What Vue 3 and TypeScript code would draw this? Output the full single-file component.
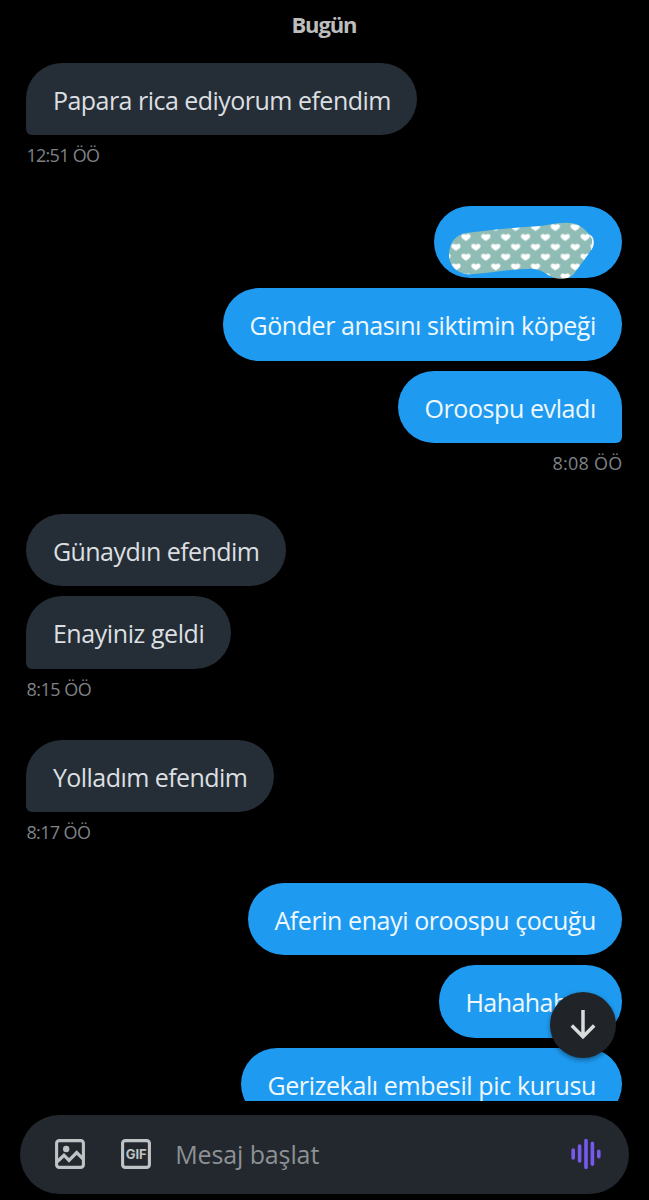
<script setup lang="ts">
import { nextTick, onMounted, ref } from 'vue'

interface Message {
  text: string
  width: number
  covered?: boolean
}

interface Group {
  side: 'in' | 'out'
  time?: string
  timeWidth?: number
  messages: Message[]
}

const groups: Group[] = [
  { side: 'in', time: '12:51 ÖÖ', timeWidth: 73, messages: [{ text: 'Papara rica ediyorum efendim', width: 338 }] },
  {
    side: 'out',
    time: '8:08 ÖÖ',
    timeWidth: 70,
    messages: [
      { text: '', width: 135, covered: true },
      { text: 'Gönder anasını siktimin köpeği', width: 346.5 },
      { text: 'Oroospu evladı', width: 171.5 },
    ],
  },
  {
    side: 'in',
    time: '8:15 ÖÖ',
    timeWidth: 65,
    messages: [
      { text: 'Günaydın efendim', width: 206.5 },
      { text: 'Enayiniz geldi', width: 151.5 },
    ],
  },
  { side: 'in', time: '8:17 ÖÖ', timeWidth: 64, messages: [{ text: 'Yolladım efendim', width: 194.5 }] },
  {
    side: 'out',
    messages: [
      { text: 'Aferin enayi oroospu çocuğu', width: 321.5 },
      { text: 'Hahahahah', width: 130.5 },
      { text: 'Gerizekalı embesil pic kurusu', width: 328.5 },
    ],
  },
]

const root = ref<HTMLElement | null>(null)

/** Tracks each label so that it fills its advance width. */
function fitLabels(): void {
  root.value?.querySelectorAll<HTMLElement>('[data-fit]').forEach((el) => {
    const count = el.textContent?.length ?? 0
    if (!count) return
    el.style.letterSpacing = '0px'
    const natural = el.getBoundingClientRect().width
    el.style.letterSpacing = `${(Number(el.dataset.fit) - natural) / count}px`
  })
}

onMounted(async () => {
  await nextTick()
  fitLabels()
})
</script>

<template>
  <main ref="root" class="screen">
    <section class="thread">
      <h1 class="day"><span data-fit="65">Bugün</span></h1>
      <div v-for="(group, g) in groups" :key="g" class="group" :class="group.side">
        <div
          v-for="(message, m) in group.messages"
          :key="m"
          class="bubble"
          :class="{ tail: group.time && m === group.messages.length - 1 }"
          :style="{ width: `${message.width + 53}px` }"
        >
          <span v-if="!message.covered" class="label" :data-fit="message.width">{{ message.text }}</span>
          <svg v-else class="scribble" viewBox="66 81 450 177" width="150" height="59">
            <defs>
              <pattern id="hearts" x="93" y="101" width="59.6" height="59.2" patternUnits="userSpaceOnUse">
                <rect width="59.6" height="59.2" fill="#8fbdb5" />
                <g fill="#fff">
                  <path id="heart" d="M0 10C-6 6-14 2-14-4C-14-9-10-10-7-10C-4-10-1-9 0-7C1-9 4-10 7-10C10-10 14-9 14-4C14 2 6 6 0 10Z" />
                  <use href="#heart" x="59.6" />
                  <use href="#heart" y="59.2" />
                  <use href="#heart" x="59.6" y="59.2" />
                  <use href="#heart" x="29.8" y="29.6" />
                </g>
              </pattern>
            </defs>
            <path d="M491 124C506 127 508 152 496 168" fill="none" stroke="#fff" stroke-width="5" />
            <path
              d="M72 183C72 145 94 121 124 117C190 109 265 101 335 97C366 95 386 86 424 86C462 86 480 105 494 123C506 143 502 164 490 181C471 207 459 224 447 239C436 252 421 254 404 254C370 253 358 224 318 224C252 225 190 237 137 241C99 242 72 216 72 183Z"
              fill="url(#hearts)"
            />
          </svg>
        </div>
        <div v-if="group.time" class="meta">
          <span :data-fit="group.timeWidth">{{ group.time }}</span>
        </div>
      </div>
    </section>

    <button class="jump" aria-label="Aşağı">
      <svg viewBox="0 0 66 66" width="66" height="66">
        <path d="M33 18V45.5M21.8 33.6L33 44.8L44.2 33.6" fill="none" stroke="#d9dadb" stroke-width="3.5" />
      </svg>
    </button>

    <footer class="composer">
      <svg class="icon" viewBox="0 0 30 30" width="30" height="30">
        <rect x="1.6" y="1.6" width="26.8" height="26.8" rx="2.7" fill="none" stroke="#c0c3c5" stroke-width="3.1" />
        <circle cx="11.2" cy="10" r="3.2" fill="#c0c3c5" />
        <path d="M2.4 22.5L9 16.2L14 21.3L21.7 13.5L28 19.8" fill="none" stroke="#c0c3c5" stroke-width="3.3" />
      </svg>
      <svg class="icon gif" viewBox="0 0 30 30" width="30" height="30">
        <rect x="1.6" y="1.6" width="26.8" height="26.8" rx="2.7" fill="none" stroke="#c0c3c5" stroke-width="3.1" />
        <text x="15.2" y="19.9" text-anchor="middle" textLength="21" lengthAdjust="spacingAndGlyphs">GIF</text>
      </svg>
      <span class="placeholder"><span data-fit="144">Mesaj başlat</span></span>
      <svg class="voice" viewBox="0 0 32 32" width="32" height="32">
        <path d="M3.2 12V20M9.6 8V23M16 2.5V29.5M22.4 5.3V26.3M28.8 13.2V18.8" fill="none" stroke="#7759ed" stroke-width="3.6" stroke-linecap="round" />
      </svg>
    </footer>
  </main>
</template>

<style>
body {
  margin: 0;
  background: #000;
}
</style>

<style scoped>
.screen {
  position: relative;
  display: flex;
  flex-direction: column;
  width: 649px;
  height: 1200px;
  overflow: hidden;
  background: #000;
  font-family: 'Open Sans', 'Noto Sans', sans-serif;
}
.screen span {
  white-space: nowrap;
}
.thread {
  flex: none;
  box-sizing: border-box;
  height: 1101.4px;
  padding: 0 26.6px 0 26.4px;
  overflow: hidden;
}
.day {
  display: flex;
  justify-content: center;
  box-sizing: border-box;
  height: 62.7px;
  margin: 0;
  padding: 9px 1px 0 0;
  color: #bdbdbd;
  font-size: 22px;
  font-weight: 700;
  line-height: 30px;
}
.group {
  display: flex;
  flex-direction: column;
  align-items: flex-start;
}
.group.out {
  align-items: flex-end;
}
.bubble {
  display: flex;
  flex: none;
  align-items: center;
  box-sizing: border-box;
  height: 72.3px;
  padding: 1.6px 26.5px 0;
  border-radius: 36.15px;
  background: #252e36;
  color: #dcdfe1;
  font-size: 25px;
  line-height: 34px;
}
.bubble + .bubble {
  margin-top: 10px;
}
.out .bubble {
  background: #1e9bf1;
  color: #eef8fe;
}
.in .tail {
  border-bottom-left-radius: 6px;
}
.out .tail {
  border-bottom-right-radius: 6px;
}
.scribble {
  flex: none;
  margin: 14.4px 0 0 -14px;
}
.meta {
  box-sizing: border-box;
  height: 71.1px;
  padding-top: 8px;
  color: #7f8286;
  font-size: 18px;
  line-height: 25px;
}
.jump {
  position: absolute;
  top: 992px;
  left: 550px;
  width: 66px;
  height: 66px;
  padding: 0;
  border: 0;
  border-radius: 50%;
  background: #202428;
  box-shadow: 0 2px 5px rgba(0, 0, 0, 0.4);
}
.jump svg {
  display: block;
}
.composer {
  display: flex;
  flex: none;
  align-items: center;
  box-sizing: border-box;
  width: 609px;
  height: 79px;
  margin: 13.4px 0 0 20px;
  padding: 0 27px 1px 34.7px;
  border-radius: 39.5px;
  background: #22282e;
}
.icon.gif {
  margin-left: 36px;
}
.gif text {
  fill: #c0c3c5;
  font-family: Inter, 'Open Sans', sans-serif;
  font-size: 13.2px;
  font-weight: 700;
}
.placeholder {
  margin-left: 24.5px;
  color: #8d9194;
  font-size: 25px;
  line-height: 34px;
}
.voice {
  margin-left: auto;
}
</style>
